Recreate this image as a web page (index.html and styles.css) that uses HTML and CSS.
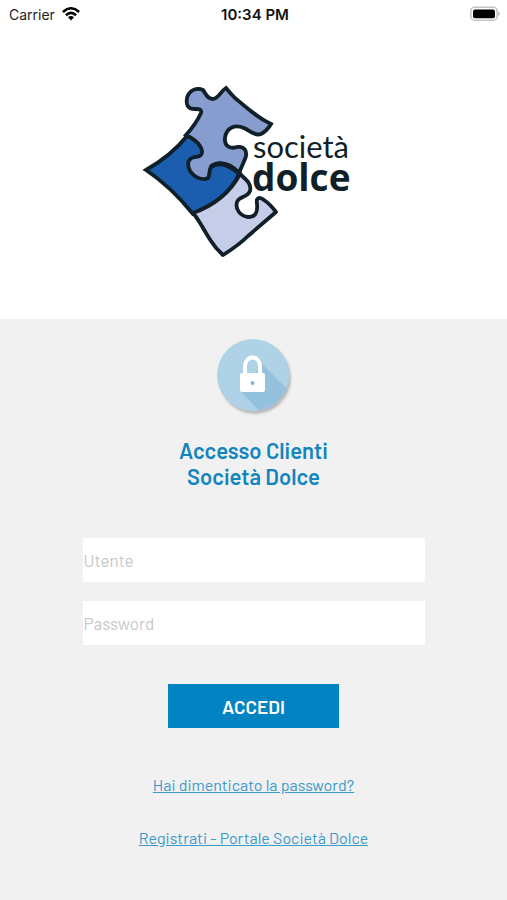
FILE: index.html
```html
<!DOCTYPE html>
<html lang="it">
<head>
<meta charset="utf-8">
<meta name="viewport" content="width=device-width, initial-scale=1">
<title>Società Dolce</title>
<link rel="stylesheet" href="styles.css">
</head>
<body>
<header class="top">
  <div class="status">
    <div class="carrier">Carrier
      <svg class="wifi" viewBox="0 0 18 14" aria-hidden="true">
        <g fill="none" stroke="#000" stroke-width="2.5"><path d="M.9 5Q9-2.4 17.1 5"/><path d="M3.9 8.2Q9 3.6 14.1 8.2"/></g>
        <path d="M6 10.3Q9 7.8 12 10.3L9 13.5z"/>
      </svg>
    </div>
    <div class="time">10:34 PM</div>
    <svg class="battery" viewBox="0 0 31 16" aria-hidden="true">
      <rect x=".8" y="1.2" width="26.4" height="13" rx="4" fill="#fff" stroke="#c4c4c4" stroke-width="1.6"/>
      <rect x="3" y="3.4" width="22" height="8.8" rx="2"/>
      <path d="M28.5 5.4q2.6 2.4 0 4.8z" fill="#aaa"/>
    </svg>
  </div>
  <svg class="logo" viewBox="133 80 241 182" role="img" aria-label="Società Dolce">
    <g stroke="#101f28" stroke-width="3.8" stroke-linejoin="miter" stroke-linecap="round">
      <path fill="#1b5dae" d="M187 136C175 151 160 162 146 170C164 182 180 198 193 214C215 205 231 192 239 174L226 150z"/>
      <path fill="#c5cde9" stroke-linejoin="round" d="M193 213C200 221 204 231 211 241Q216 249 223 255Q239 245 248 236L276 212Q270 204 264 200C259 196 256 198 257 204C258 213 255 217 248 217C240 216 235 209 237 202C239 196 247 198 250 191C252 183 245 179 240 174C231 191 215 205 193 213z"/>
      <path fill="#879ccf" d="M226 88Q230 93 235 98C248 109 258 118 271 124Q267 131 261 134C256 136 251 132 246 129C235 123 226 128 225 138C224 147 231 149 237 147C245 146 248 152 245 159L239 173C232 165 224 162 216 164C207 166 211 174 208 178C202 181 194 177 190 171C186 162 189 158 195 157C202 157 204 152 200 146C197 141 192 138 186 135Q196 124 201 113C202 109 199 109 195 109C187 109 186 104 187 98C189 90 197 87 203 90C206 94 207 99 213 99C219 98 220 92 226 88z"/>
      <path fill="none" stroke-width="5" d="M212 166C220 161 230 165 240 174"/>
    </g>
    <text class="logo-light" x="253" y="158">società</text>
    <text class="logo-bold" x="252" y="191">dolce</text>
  </svg>
</header>
<main class="login">
  <svg class="lock" viewBox="0 0 80 80" aria-hidden="true">
    <defs><clipPath id="disc"><circle cx="39" cy="39" r="36"/></clipPath></defs>
    <circle class="disc" cx="39" cy="39" r="36" fill="#afd2e7"/>
    <path clip-path="url(#disc)" fill="#94c2de" d="M48 28L80 60V80H50L27 56z"/>
    <path d="M31 39V30a7.500 8.500 0 0 1 15 0V39" fill="none" stroke="#fff" stroke-width="4"/>
    <rect x="26" y="37" width="25" height="19" rx="2" fill="#fff"/>
    <circle cx="38.500" cy="47" r="2" fill="#7fb5d6"/>
  </svg>
  <h1>Accesso Clienti<br>Società Dolce</h1>
  <form class="form">
    <input type="text" placeholder="Utente" aria-label="Utente">
    <input type="password" placeholder="Password" aria-label="Password">
    <button type="button">ACCEDI</button>
  </form>
  <nav class="links">
    <a href="#">Hai dimenticato la password?</a>
    <a href="#">Registrati - Portale Società Dolce</a>
  </nav>
</main>
</body>
</html>
```
FILE: styles.css
```css
* { box-sizing: border-box; }
body {
  margin: 0;
  min-height: 100vh;
  display: flex;
  flex-direction: column;
  background: #f1f1f1;
  font-family: Barlow, Roboto, sans-serif;
}
.top {
  display: flex;
  flex-direction: column;
  align-items: center;
  padding-bottom: 57px;
  background: #fff;
}
.status {
  display: grid;
  grid-template-columns: 1fr auto 1fr;
  align-items: center;
  width: 100%;
  height: 28px;
  padding: 0 6px 0 9px;
  margin-bottom: 52px;
  font: 14px Inter, sans-serif;
  color: #222;
}
.carrier { display: flex; align-items: center; gap: 7px; }
.wifi { width: 18px; height: 14px; }
.time { font-size: 15px; font-weight: 600; color: #111; }
.battery { width: 31px; height: 16px; justify-self: end; }
.logo { width: 241px; height: 182px; }
.logo text { fill: #101f28; }
.logo .logo-light { font: 31px Lato, sans-serif; }
.logo .logo-bold { font: 700 37px "Open Sans", sans-serif; }
.login {
  display: flex;
  flex-direction: column;
  align-items: center;
  padding: 17px 16px 48px;
}
.lock { width: 80px; height: 80px; overflow: visible; }
.disc { filter: drop-shadow(2px 3px 1px #bbb); }
h1 {
  margin: 21px 0 49px;
  font-size: 22px;
  font-weight: 600;
  line-height: 26px;
  text-align: center;
  color: #1285be;
}
.form {
  display: flex;
  flex-direction: column;
  align-items: center;
  width: 72%;
  gap: 19px;
}
.form input {
  width: 100%;
  height: 44px;
  padding: 0 1px;
  border: 0;
  border-radius: 0;
  background: #fff;
  color: #333;
  font: inherit;
  font-size: 17px;
}
.form input::placeholder { color: #c7c7c7; opacity: 1; }
.form button {
  width: 50%;
  height: 44px;
  margin-top: 20px;
  border: 0;
  background: #0284c2;
  color: #fff;
  font: inherit;
  font-size: 19px;
  font-weight: 600;
}
.links {
  display: flex;
  flex-direction: column;
  align-items: center;
  gap: 33px;
  margin-top: 47px;
  font-size: 16px;
  line-height: 20px;
}
.links a { color: #3a9acb; text-underline-offset: 1px; }
```
